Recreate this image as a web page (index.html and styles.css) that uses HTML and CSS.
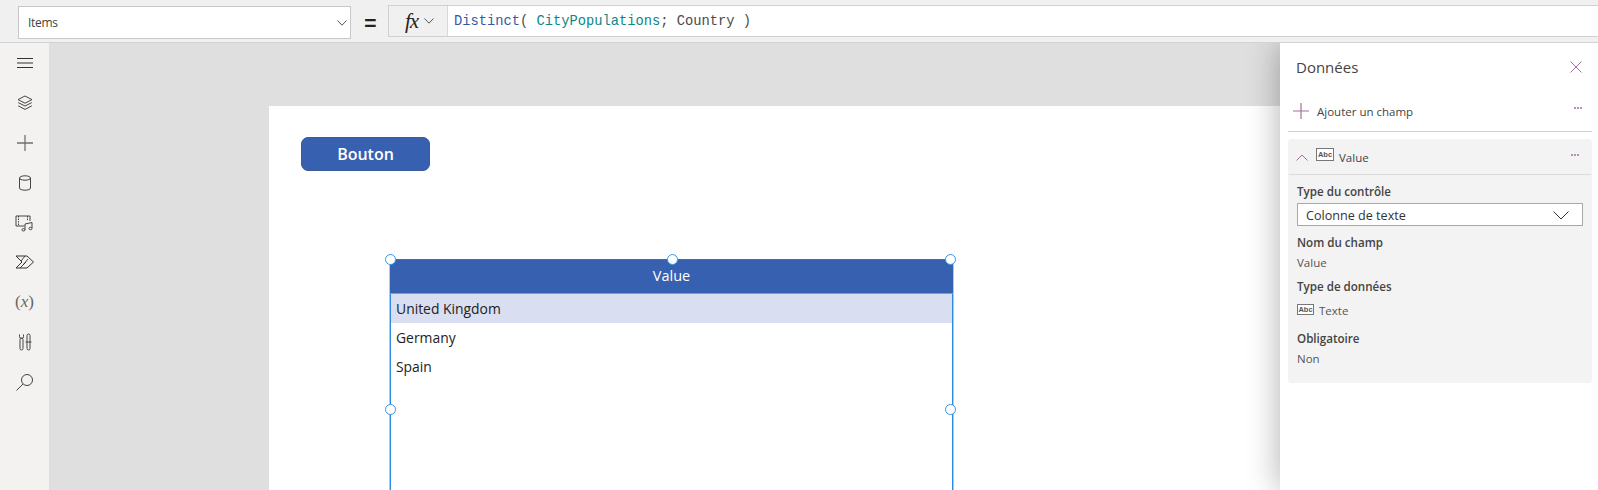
FILE: index.html
```html
<!DOCTYPE html>
<html lang="fr">
<head>
<meta charset="utf-8">
<title>Données</title>
<link rel="stylesheet" href="styles.css">
</head>
<body>
<div class="app">
  <header class="topbar">
    <div class="propbox">
      <span class="propname">Items</span>
      <svg class="propchev" width="10" height="6" viewBox="0 0 10 6"><path d="M.5.5 5 5.2 9.5.5" fill="none" stroke="#555"/></svg>
    </div>
    <div class="equals">=</div>
    <div class="formula">
      <div class="fx"><span class="fxt">fx</span><svg width="10" height="6" viewBox="0 0 10 6"><path d="M.5.5 5 5.2 9.5.5" fill="none" stroke="#555"/></svg></div>
      <div class="code"><span class="fn">Distinct</span>( <span class="ds">CityPopulations</span>; Country )</div>
    </div>
  </header>
  <div class="main">
    <nav class="rail">
      <div class="ri"><svg width="20" height="20" viewBox="0 0 20 20"><path d="M2 5.500h16M2 10h16M2 14.500h16" stroke="#333" fill="none"/></svg></div>
      <div class="ri"><svg width="20" height="20" viewBox="0 0 20 20" fill="none" stroke="#444"><path d="M10 3l7 3.600-7 3.600-7-3.600z"/><path d="M3.200 9.600 10 13l6.800-3.400"/><path d="M3.200 12.800 10 16.400l6.800-3.600"/></svg></div>
      <div class="ri"><svg width="20" height="20" viewBox="0 0 20 20"><path d="M2 10h16M10 2v16" stroke="#707070" stroke-width="1.300" fill="none"/></svg></div>
      <div class="ri"><svg width="20" height="20" viewBox="0 0 20 20" fill="none" stroke="#444"><ellipse cx="10" cy="5" rx="5.500" ry="2.200"/><path d="M4.500 5v10c0 1.300 2.500 2.200 5.500 2.200s5.500-.9 5.500-2.200V5"/></svg></div>
      <div class="ri"><svg width="20" height="20" viewBox="0 0 20 20" fill="none" stroke="#444"><path d="M9.500 13H1V3h14v5"/><path d="M3.500 3v10M12.500 3v5" stroke-dasharray="1.500 1"/><path d="M10 16.500V11l7-1.500V15"/><ellipse cx="8.500" cy="16.800" rx="1.500" ry="1.200"/><ellipse cx="15.500" cy="15.500" rx="1.500" ry="1.200"/></svg></div>
      <div class="ri"><svg width="20" height="20" viewBox="0 0 20 20" fill="none" stroke="#333"><path d="M1 4h11l6.500 6-6.500 6H1l6-6z"/><path d="M6 9l4-5M8 13l5-6M5 16l6-6" stroke-width=".9"/></svg></div>
      <div class="ri vartxt">(<i>x</i>)</div>
      <div class="ri"><svg width="20" height="20" viewBox="0 0 20 20" fill="none" stroke="#444"><rect x="5" y="6" width="3" height="12" rx="1.500"/><path d="M4.500 2.500v2a2 2 0 0 0 4 0v-2"/><rect x="12" y="2" width="3" height="16" rx="1.500"/><path d="M10.500 10h6"/></svg></div>
      <div class="ri"><svg width="20" height="20" viewBox="0 0 20 20" fill="none" stroke="#444"><circle cx="12" cy="8" r="5.500"/><path d="M8 12 1.500 18.500"/></svg></div>
    </nav>
    <div class="canvas">
      <div class="screen">
        <button class="btn">Bouton</button>
        <div class="gallery">
          <div class="ghead">Value</div>
          <div class="grow sel">United Kingdom</div>
          <div class="grow">Germany</div>
          <div class="grow">Spain</div>
          <span class="h h-tl"></span><span class="h h-tc"></span><span class="h h-tr"></span>
          <span class="h h-ml"></span><span class="h h-mr"></span>
        </div>
      </div>
    </div>
    <aside class="panel">
      <div class="ptitle">
        <span>Données</span>
        <svg width="12" height="12" viewBox="0 0 12 12"><path d="M.5.5l11 11M11.500.5l-11 11" stroke="#a56f9f" fill="none"/></svg>
      </div>
      <div class="addrow">
        <svg width="16" height="16" viewBox="0 0 16 16"><path d="M0 8h16M8 0v16" stroke="#a56f9f" stroke-width="1.200" fill="none"/></svg>
        <span class="addtxt">Ajouter un champ</span>
        <span class="dots dots-add"><i></i><i></i><i></i></span>
      </div>
      <div class="card">
        <div class="chead">
          <svg width="12" height="7" viewBox="0 0 12 7"><path d="M.5 6.500 6 1l5.500 5.500" stroke="#a56f9f" fill="none"/></svg>
          <span class="abc abc-big">Abc</span>
          <span class="cval">Value</span>
          <span class="dots"><i></i><i></i><i></i></span>
        </div>
        <div class="cbody">
          <div class="lbl">Type du contrôle</div>
          <div class="select"><span>Colonne de texte</span>
            <svg width="16" height="9" viewBox="0 0 16 9"><path d="M.5.5 8 8l7.500-7.500" stroke="#333" fill="none"/></svg>
          </div>
          <div class="lbl l2">Nom du champ</div>
          <div class="val">Value</div>
          <div class="lbl l3">Type de données</div>
          <div class="val typ"><span class="abc abc-sm">Abc</span><span>Texte</span></div>
          <div class="lbl l4">Obligatoire</div>
          <div class="val">Non</div>
        </div>
      </div>
    </aside>
  </div>
</div>
</body>
</html>
```

FILE: styles.css
```css
* { box-sizing: border-box; }
html, body { margin: 0; height: 100%; overflow: hidden; }
body { font-family: "Open Sans", "Liberation Sans", sans-serif; color: #333; }
.app { width: 1598px; height: 490px; display: flex; flex-direction: column; overflow: hidden; }

.topbar { height: 43px; flex: none; background: #f0f0f0; border-bottom: 1px solid #d2d2d2; display: flex; align-items: flex-start; padding: 5px 0 0 18px; position: relative; z-index: 3; }
.propbox { width: 333px; height: 33px; margin-top: 1px; background: #fff; border: 1px solid #c8c8c8; display: flex; align-items: center; justify-content: space-between; padding: 0 3px 0 9px; }
.propname { font-size: 12px; letter-spacing: -.3px; color: #444; }
.equals { width: 37px; padding-left: 2px; text-align: center; font-size: 21px; font-weight: 700; line-height: 35px; color: #222; font-family: "Liberation Sans", sans-serif; }
.formula { flex: 1; height: 32px; display: flex; background: #fff; border: 1px solid #d0d0d0; border-right: 0; }
.fx { width: 59px; flex: none; background: #f0f0f0; border-right: 1px solid #d8d8d8; display: flex; align-items: center; justify-content: center; gap: 6px; padding-left: 3px; }
.fxt { font-family: "Liberation Serif", serif; font-style: italic; font-size: 21px; color: #222; letter-spacing: -1px; }
.code { font-family: "Liberation Mono", monospace; font-size: 13.750px; line-height: 32px; padding-left: 6px; color: #4a4a4a; white-space: pre; }
.fn { color: #2f5c9f; }
.ds { color: #0f8585; }

.main { flex: 1; display: flex; min-height: 0; position: relative; }
.rail { width: 49px; flex: none; background: #f3f2f1; display: flex; flex-direction: column; position: relative; z-index: 1; }
.ri { height: 39.900px; flex: none; display: flex; align-items: center; justify-content: center; }
.vartxt { font-family: "Liberation Serif", serif; font-size: 17px; color: #666; }

.canvas { flex: 1; min-width: 0; background: #dfdfdf; padding: 63px 0 0 220px; overflow: hidden; }
.screen { background: #fff; height: 600px; padding: 31px 0 0 32px; }
.btn { display: block; width: 129px; height: 34px; padding: 0; background: #3760b0; border: 1px solid #3a5a98; border-radius: 7px; color: #fff; font: 600 16px "Open Sans", sans-serif; }
.gallery { position: relative; width: 563px; height: 400px; margin: 88px 0 0 89px; border-left: 1px solid #2e8ae0; border-right: 1px solid #2e8ae0; box-shadow: -1px 0 0 #a4cdf2, 1px 0 0 #a4cdf2; }
.ghead { height: 35px; margin: 0 -1px; background: #3760b0; border-top: 1px solid #2a73cf; border-bottom: 1px solid #7f9ad0; color: #fff; font-size: 14.500px; line-height: 32px; text-align: center; }
.grow { height: 29px; padding-left: 5px; font-size: 13.900px; line-height: 29px; color: #222; }
.sel { background: #d9dff0; }
.h { position: absolute; width: 11px; height: 11px; border-radius: 50%; background: #fff; border: 1.500px solid #3a96e6; }
.h-tl { left: -6px; top: -5px; }
.h-tc { left: 276px; top: -5px; }
.h-tr { right: -4px; top: -5px; }
.h-ml { left: -6px; top: 145px; }
.h-mr { right: -4px; top: 145px; }

.panel { width: 318px; flex: none; background: #fff; box-shadow: 0 0 32px rgba(0,0,0,.32); position: relative; z-index: 2; padding: 0 6px 0 8px; }
.ptitle { height: 46px; display: flex; align-items: center; justify-content: space-between; padding: 2px 10px 0 8px; font-size: 15px; color: #444; }
.addrow { height: 43px; display: flex; align-items: center; gap: 8px; padding: 2px 0 0 5px; border-bottom: 1px solid #d0d0d0; }
.addtxt { font-size: 11.500px; color: #444; flex: 1; }
.dots { display: flex; gap: 1px; margin-left: auto; }
.dots i { width: 2px; height: 2px; background: #b98fb8; display: block; }
.dots-add { margin: 0 10px 6px 0; }
.card { margin-top: 7px; height: 244px; background: #f3f3f3; border-radius: 4px; }
.chead { height: 36px; display: flex; align-items: center; border-bottom: 1px solid #dcdcdc; margin: 0 1px; padding: 2px 12px 0 7px; }
.chead .dots { margin-bottom: 6px; }
.abc { display: inline-flex; align-items: center; justify-content: center; flex: none; border: 1px solid #777; font: 700 7.500px "Liberation Sans", sans-serif; color: #555; background: #fff; }
.abc-big { width: 18px; height: 13px; margin: -7px 5px 0 8px; }
.abc-sm { width: 17px; height: 11px; margin-top: -4px; }
.cval { font-size: 11.500px; color: #444; }
.cbody { padding: 9px 9px 0 9px; }
.lbl { font-size: 11.600px; font-weight: 600; line-height: 16px; color: #444; }
.select { height: 23px; margin-top: 3px; padding: 1px 13px 0 8px; background: #fff; border: 1px solid #a8a8a8; display: flex; align-items: center; justify-content: space-between; font-size: 12.600px; color: #333; }
.l2 { margin-top: 9px; }
.l3 { margin-top: 8px; }
.l4 { margin-top: 12px; }
.val { font-size: 11.500px; line-height: 16px; color: #555; margin-top: 4px; }
.typ { display: flex; align-items: center; gap: 5px; margin-top: 8px; }
```
